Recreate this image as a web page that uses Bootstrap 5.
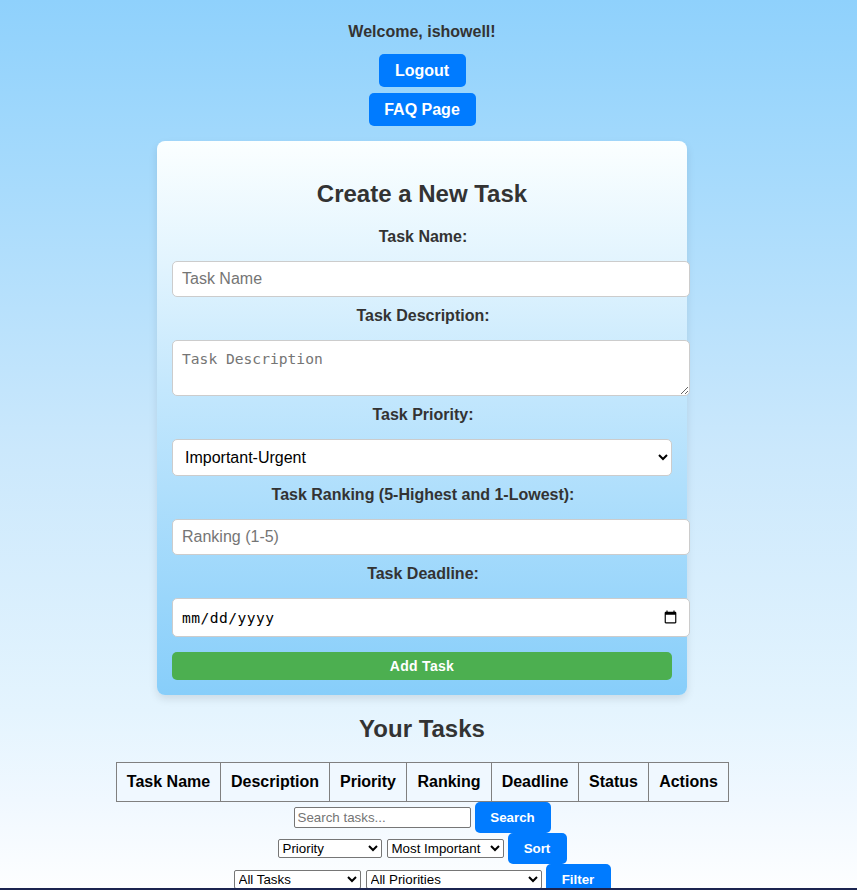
<!DOCTYPE html>
<html lang="en">
<head>
<meta charset="utf-8">
<title>Your Tasks</title>
<meta name="viewport" content="width=device-width, initial-scale=1">
<link href="https://cdn.jsdelivr.net/npm/bootstrap@5.3.0/dist/css/bootstrap.min.css" rel="stylesheet">
<style>
html,body{height:890px;overflow:hidden}
body{font:16px/18px "Liberation Sans",Arial,sans-serif;color:#333;background:linear-gradient(#8fd1fc 0,#a0d8fc 130px,#cbe8fc 450px,#e4f4fe 710px,#f0f8ff 800px,#fdfeff 888px)}
.page{width:844px;height:888px;padding-top:23px}
.welcome{height:18px;margin-bottom:13px}
.btn-site{background:#007bff;color:#fff;font-weight:700;border:0;border-radius:5px;padding:0}
.btn-site:hover{background:#0069d9;color:#fff}
.btn-top{height:33px;line-height:33px;font-size:16px}
.btn-faq{width:107px;margin-top:6px}
.w-logout{width:87px}
.task-form{width:530px;height:554px;margin-top:15px;padding:39px 15px 0;border-radius:8px;background:linear-gradient(#fbffff 0,#e2f4fe 22%,#c3e7fd 45%,#87cefa 100%);box-shadow:0 4px 8px rgba(0,0,0,.1)}
h2{font-size:24px;line-height:27px;font-weight:700;margin:0}
.form-title{margin-bottom:21px}
.task-form label{display:block;height:18px;font-weight:700;margin-bottom:15px;padding-left:2px}
.field{display:block;width:518px;height:36px;border:1px solid #ccc;border-radius:5px;padding:8px 9px;margin-bottom:10px;background:#fff;font-size:16px;line-height:18px;color:#000}
.field::placeholder,.find::placeholder{color:#757575}
.field:focus{outline:1px solid #007bff}
textarea.field{height:56px;font:14.62px/20px "DejaVu Sans Mono",monospace;resize:vertical}
select.field{width:500px;height:37px;padding:8px}
input[type=date].field{height:39px;font:14.62px/20px "DejaVu Sans Mono",monospace;letter-spacing:.44px;margin-bottom:15px}
.btn-add{width:500px;height:28px;line-height:28px;border:0;border-radius:5px;background:#4caf50;color:#fff;font-size:14px;font-weight:700;letter-spacing:.3px;padding:0}
.tasks-title{margin-top:20px;margin-bottom:20px}
.task-table{width:613px;height:40px;table-layout:fixed;border-collapse:collapse;background:#f0f8ff;color:#000}
.task-table th{border:1px solid #808080;padding:0 0 0 1px;text-align:center;font-weight:700}
.tool-row{height:31px;gap:4px}
.tool-row .btn-site{height:31px;line-height:31px;font-size:13.33px}
.tool-row select,.find{font-size:13.33px;line-height:15px;border:1px solid #767676;border-radius:2px;background:#fff;color:#000;height:19px;padding:0}
.tool-row select:first-child{margin-right:1px}
.tool-row .find{width:177px;height:21px;padding:1px 3px}
.w-76{width:76px}.w-59{width:59px}.w-65{width:65px}
.s-104{width:104px}.s-117{width:117px}.s-127{width:127px}.s-176{width:176px}
.baseline{height:2px;background:#1b2450}
</style>
<script src="https://cdn.jsdelivr.net/npm/bootstrap@5.3.0/dist/js/bootstrap.bundle.min.js"></script>
</head>
<body>
<main class="page d-flex flex-column align-items-center overflow-hidden">
  <div class="welcome fw-bold">Welcome, ishowell!</div>
  <a href="#" class="btn btn-site btn-top w-logout flex-shrink-0">Logout</a>
  <a href="#" class="btn btn-site btn-top btn-faq flex-shrink-0">FAQ Page</a>
  <form class="task-form text-center flex-shrink-0">
    <h2 class="form-title">Create a New Task</h2>
    <label for="name">Task Name:</label>
    <input id="name" class="field" type="text" placeholder="Task Name">
    <label for="desc">Task Description:</label>
    <textarea id="desc" class="field" placeholder="Task Description"></textarea>
    <label for="prio">Task Priority:</label>
    <select id="prio" class="field"><option>Important-Urgent</option></select>
    <label for="rank">Task Ranking (5-Highest and 1-Lowest):</label>
    <input id="rank" class="field" type="text" placeholder="Ranking (1-5)">
    <label for="due">Task Deadline:</label>
    <input id="due" class="field" type="date">
    <button type="button" class="btn btn-add d-block">Add Task</button>
  </form>
  <h2 class="tasks-title">Your Tasks</h2>
  <table class="task-table flex-shrink-0">
    <colgroup><col width="104"><col width="109"><col width="77"><col width="85"><col width="87"><col width="70"><col width="80"></colgroup>
    <thead><tr><th>Task Name</th><th>Description</th><th>Priority</th><th>Ranking</th><th>Deadline</th><th>Status</th><th>Actions</th></tr></thead>
  </table>
  <div class="tool-row d-flex align-items-center flex-shrink-0">
    <input class="find" type="text" placeholder="Search tasks..."><button class="btn btn-site w-76">Search</button>
  </div>
  <div class="tool-row d-flex align-items-center flex-shrink-0">
    <select class="s-104"><option>Priority</option></select><select class="s-117"><option>Most Important</option></select><button class="btn btn-site w-59">Sort</button>
  </div>
  <div class="tool-row d-flex align-items-center flex-shrink-0">
    <select class="s-127"><option>All Tasks</option></select><select class="s-176"><option>All Priorities</option></select><button class="btn btn-site w-65">Filter</button>
  </div>
</main>
<div class="baseline"></div>
</body>
</html>
